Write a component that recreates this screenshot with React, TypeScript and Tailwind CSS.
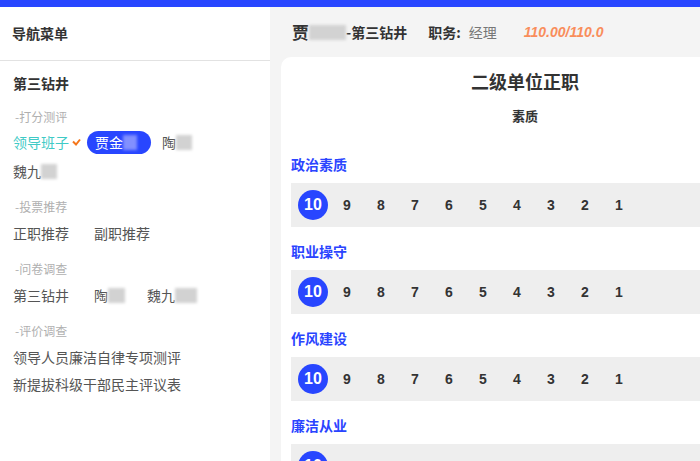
import React from 'react';

const SCORES = [10, 9, 8, 7, 6, 5, 4, 3, 2, 1];
const SECTIONS = ['政治素质', '职业操守', '作风建设', '廉洁从业'];

function Blur({ w, tone = 'gray' }: { w: number; tone?: 'gray' | 'blue' }) {
  return (
    <span
      className={`inline-block h-[15px] align-[-2px] blur-[1.5px] ${tone === 'blue' ? 'bg-[#8290ff]' : 'bg-[#d2d2d2]'}`}
      style={{ width: w }}
    />
  );
}

function GroupLabel({ children }: { children: React.ReactNode }) {
  return <div className="text-[12px] leading-[18px] text-[#b0b0b0] pl-[2px] mt-[15px]">{children}</div>;
}

function Sidebar() {
  return (
    <aside className="w-[270px] shrink-0 bg-white text-[14px] text-[#555]">
      <div className="h-[54px] flex items-center px-[12px] border-b border-[#e2e2e2] font-bold text-[#333]">导航菜单</div>
      <div className="px-[13px]">
        <div className="mt-[12px] leading-[20px] font-bold text-[#333]">第三钻井</div>

        <GroupLabel>-打分测评</GroupLabel>
        <div className="mt-[4px] flex items-center h-[24px]">
          <span className="text-[#3fcac6]">领导班子</span>
          <svg width="9" height="8" viewBox="0 0 9 8" className="ml-[3px]">
            <polyline points="1,3.5 4,6.5 8,1.5" fill="none" stroke="#f5761a" strokeWidth="2" />
          </svg>
          <span className="ml-[6px] h-[23px] flex items-center pl-[8px] pr-[14px] rounded-full bg-[#2846ff] text-white">
            贾金<Blur w={14} tone="blue" />
          </span>
          <span className="ml-[11px]">陶<Blur w={16} /></span>
        </div>
        <div className="mt-[5px] h-[24px] flex items-center">魏九<Blur w={16} /></div>

        <GroupLabel>-投票推荐</GroupLabel>
        <div className="mt-[5px] h-[24px] flex items-center gap-[25px]">
          <span>正职推荐</span>
          <span>副职推荐</span>
        </div>

        <GroupLabel>-问卷调查</GroupLabel>
        <div className="mt-[5px] h-[24px] flex items-center">
          <span>第三钻井</span>
          <span className="ml-[25px]">陶<Blur w={17} /></span>
          <span className="ml-[22px]">魏九<Blur w={22} /></span>
        </div>

        <GroupLabel>-评价调查</GroupLabel>
        <div className="mt-[5px] h-[24px] flex items-center">领导人员廉洁自律专项测评</div>
        <div className="mt-[3px] h-[24px] flex items-center">新提拔科级干部民主评议表</div>
      </div>
    </aside>
  );
}

function ScoreRow() {
  return (
    <div className="h-[44px] bg-[#eeeeee] flex items-center pl-[7px] gap-[4px]">
      {SCORES.map(n =>
        n === 10 ? (
          <span key={n} className="w-[30px] h-[30px] rounded-full bg-[#2846ff] text-white flex items-center justify-center text-[16px] font-bold font-['Liberation_Sans',sans-serif]">
            {n}
          </span>
        ) : (
          <span key={n} className="w-[30px] h-[30px] flex items-center justify-center text-[14px] font-bold text-[#333] font-['Liberation_Sans',sans-serif]">
            {n}
          </span>
        )
      )}
    </div>
  );
}

export default function App() {
  return (
    <div className="w-[700px] h-[461px] overflow-hidden font-['Noto_Sans_CJK_SC',sans-serif]">
      <div className="h-[7px] bg-[#2846ff]" />
      <div className="flex w-[780px] h-[454px]">
        <Sidebar />
        <main className="flex-1 bg-[#f4f4f4] flex flex-col overflow-hidden">
          <div className="h-[50px] shrink-0 flex items-center pl-[22px] text-[#333]">
            <span className="text-[17px] font-bold">贾</span>
            <Blur w={37} />
            <span className="text-[14px] font-bold">-第三钻井</span>
            <span className="ml-[21px] text-[14px] font-bold">职务:</span>
            <span className="ml-[8px] text-[14px] text-[#777]">经理</span>
            <span className="ml-[27px] text-[14px] font-bold italic text-[#f98d5b] font-['Liberation_Sans',sans-serif]">110.00/110.0</span>
          </div>
          <div className="flex-1 ml-[11px] mr-[11px] bg-white rounded-tl-[10px] rounded-tr-[10px] px-[10px]">
            <div className="mt-[12px] text-center text-[18px] leading-[24px] font-bold text-[#333]">二级单位正职</div>
            <div className="mt-[12px] text-center text-[13px] leading-[22px] font-bold text-[#333]">素质</div>
            <div className="mt-[28px]">
              {SECTIONS.map(s => (
                <div key={s} className="mb-[15px]">
                  <div className="text-[14px] leading-[18px] font-bold text-[#2a44ff]">{s}</div>
                  <div className="mt-[10px]">
                    <ScoreRow />
                  </div>
                </div>
              ))}
            </div>
          </div>
        </main>
      </div>
    </div>
  );
}
